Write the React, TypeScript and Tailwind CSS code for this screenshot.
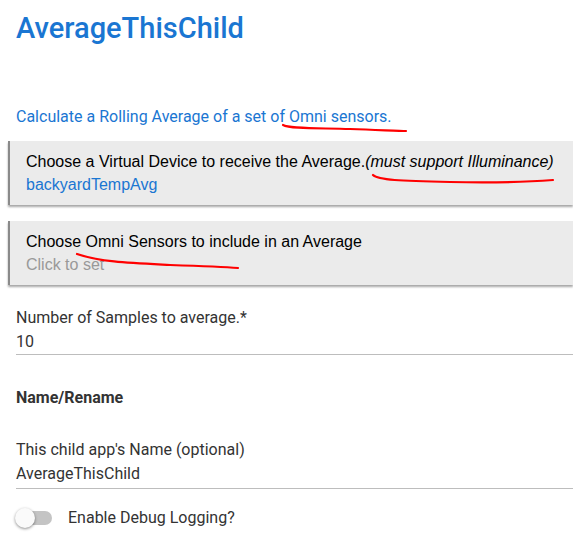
import React from "react";

const roboto = { fontFamily: "Roboto, 'Liberation Sans', sans-serif" };

function InputBox({
  title,
  value,
  muted,
}: {
  title: React.ReactNode;
  value: string;
  muted?: boolean;
}) {
  return (
    <div className="ml-2 border-l-2 border-[#8a8a8a] bg-[#ebebeb] shadow-[0_2px_2px_rgba(0,0,0,0.35)] pl-4 pt-[9px] pb-[9px] font-['Liberation_Sans',sans-serif] text-[16px] leading-[23px]">
      <div className="text-black">{title}</div>
      <div className={muted ? "text-[#999]" : "text-[#1a76d2]"}>{value}</div>
    </div>
  );
}

function TextField({ label, value, pb }: { label: string; value: string; pb: string }) {
  return (
    <div className="pl-4 text-[16px] text-[#333]" style={roboto}>
      <div className="leading-[24px]">{label}</div>
      <div className={`leading-[24px] border-b border-[#bdbdbd] ${pb}`}>{value}</div>
    </div>
  );
}

export default function App() {
  return (
    <div className="relative w-[573px] h-[542px] overflow-hidden bg-white" style={roboto}>
      <h1 className="pl-4 pt-[10px] text-[29px] leading-[36px] font-medium text-[#1a76d2]">
        AverageThisChild
      </h1>

      <p className="pl-4 mt-[60px] text-[16px] leading-[22px] text-[#1a76d2]">
        Calculate a Rolling Average of a set of Omni sensors.
      </p>

      <div className="mt-[13px]">
        <InputBox
          title={
            <>
              Choose a Virtual Device to receive the Average.
              <i>(must support Illuminance)</i>
            </>
          }
          value="backyardTempAvg"
        />
      </div>

      <div className="mt-[16px]">
        <InputBox title="Choose Omni Sensors to include in an Average" value="Click to set" muted />
      </div>

      <div className="mt-[21px]">
        <TextField label="Number of Samples to average.*" value="10" pb="pb-0" />
      </div>

      <div className="pl-4 mt-[31px] text-[16px] font-bold leading-[24px] text-[#333]">
        Name/Rename
      </div>

      <div className="mt-[28px]">
        <TextField label="This child app's Name (optional)" value="AverageThisChild" pb="pb-[2px]" />
      </div>

      <div className="flex items-center pl-4 mt-[17px] gap-4">
        <div className="relative w-[36px] h-[14px] rounded-full bg-[#c4c4c4]">
          <div className="absolute -left-[1px] -top-[3px] w-[20px] h-[20px] rounded-full bg-[#fafafa] shadow-[0_1px_3px_rgba(0,0,0,0.45)]" />
        </div>
        <span className="text-[16px] text-[#333]">Enable Debug Logging?</span>
      </div>

      <svg className="absolute left-0 top-0 pointer-events-none" width="573" height="542">
        <path d="M283 125 C290 129 320 128 350 129 C380 130 400 131 406 131" stroke="#f00" strokeWidth="2.2" fill="none" strokeLinecap="round" />
        <path d="M373 175 C378 180 400 181 450 182 C500 183 540 181 553 180" stroke="#f00" strokeWidth="2.2" fill="none" strokeLinecap="round" />
        <path d="M77 254 C100 262 130 263 170 265 C200 266 225 267 238 268" stroke="#f00" strokeWidth="2.2" fill="none" strokeLinecap="round" />
      </svg>
    </div>
  );
}
